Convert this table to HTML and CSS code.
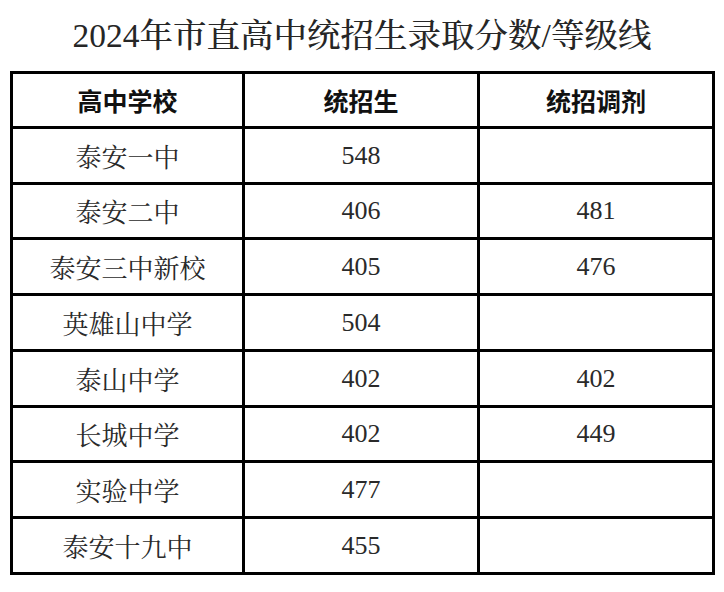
FILE: index.html
```html
<!DOCTYPE html>
<html lang="zh-CN">
<head>
<meta charset="utf-8">
<title>2024年市直高中统招生录取分数/等级线</title>
<link rel="stylesheet" href="styles.css">
</head>
<body>
<div class="page">
  <h1 class="title">2024年市直高中统招生录取分数/等级线</h1>
  <table class="score-table">
    <colgroup>
      <col class="c1"><col class="c2"><col class="c3">
    </colgroup>
    <thead>
      <tr><th>高中学校</th><th>统招生</th><th>统招调剂</th></tr>
    </thead>
    <tbody>
      <tr><td>泰安一中</td><td class="num">548</td><td class="num"></td></tr>
      <tr><td>泰安二中</td><td class="num">406</td><td class="num">481</td></tr>
      <tr><td>泰安三中新校</td><td class="num">405</td><td class="num">476</td></tr>
      <tr><td>英雄山中学</td><td class="num">504</td><td class="num"></td></tr>
      <tr><td>泰山中学</td><td class="num">402</td><td class="num">402</td></tr>
      <tr><td>长城中学</td><td class="num">402</td><td class="num">449</td></tr>
      <tr><td>实验中学</td><td class="num">477</td><td class="num"></td></tr>
      <tr><td>泰安十九中</td><td class="num">455</td><td class="num"></td></tr>
    </tbody>
  </table>
</div>
</body>
</html>
```
FILE: styles.css
```css
html, body {
  margin: 0;
  padding: 0;
  background: #ffffff;
}
.page {
  width: 724px;
  padding-top: 17px;
}
.title {
  margin: 0 0 16px 0;
  height: 38px;
  line-height: 38px;
  text-align: center;
  font-family: "Liberation Serif", "Noto Serif CJK SC", "Source Han Serif SC", "Noto Sans CJK SC", serif;
  font-size: 33.5px;
  font-weight: 500;
  color: #262626;
  letter-spacing: 0;
  padding-left: 0;
}
.score-table {
  margin-left: 10px;
  width: 702px;
  border-collapse: collapse;
  table-layout: fixed;
}
.c1 { width: 232px; }
.c2 { width: 235px; }
.c3 { width: 235px; }
.score-table th,
.score-table td {
  border: 3px solid #000000;
  height: 51.75px;
  padding: 0;
  text-align: center;
  vertical-align: middle;
}
.score-table th {
  font-family: "Noto Sans CJK SC", sans-serif;
  font-size: 25px;
  font-weight: bold;
  color: #111111;
}
.score-table td {
  font-family: "Liberation Serif", "Noto Serif CJK SC", "Source Han Serif SC", "Noto Sans CJK SC", serif;
  font-size: 26px;
  color: #2a2a2a;
}
.score-table td.num {
  font-size: 26px;
  padding-top: 1px;
}
```
